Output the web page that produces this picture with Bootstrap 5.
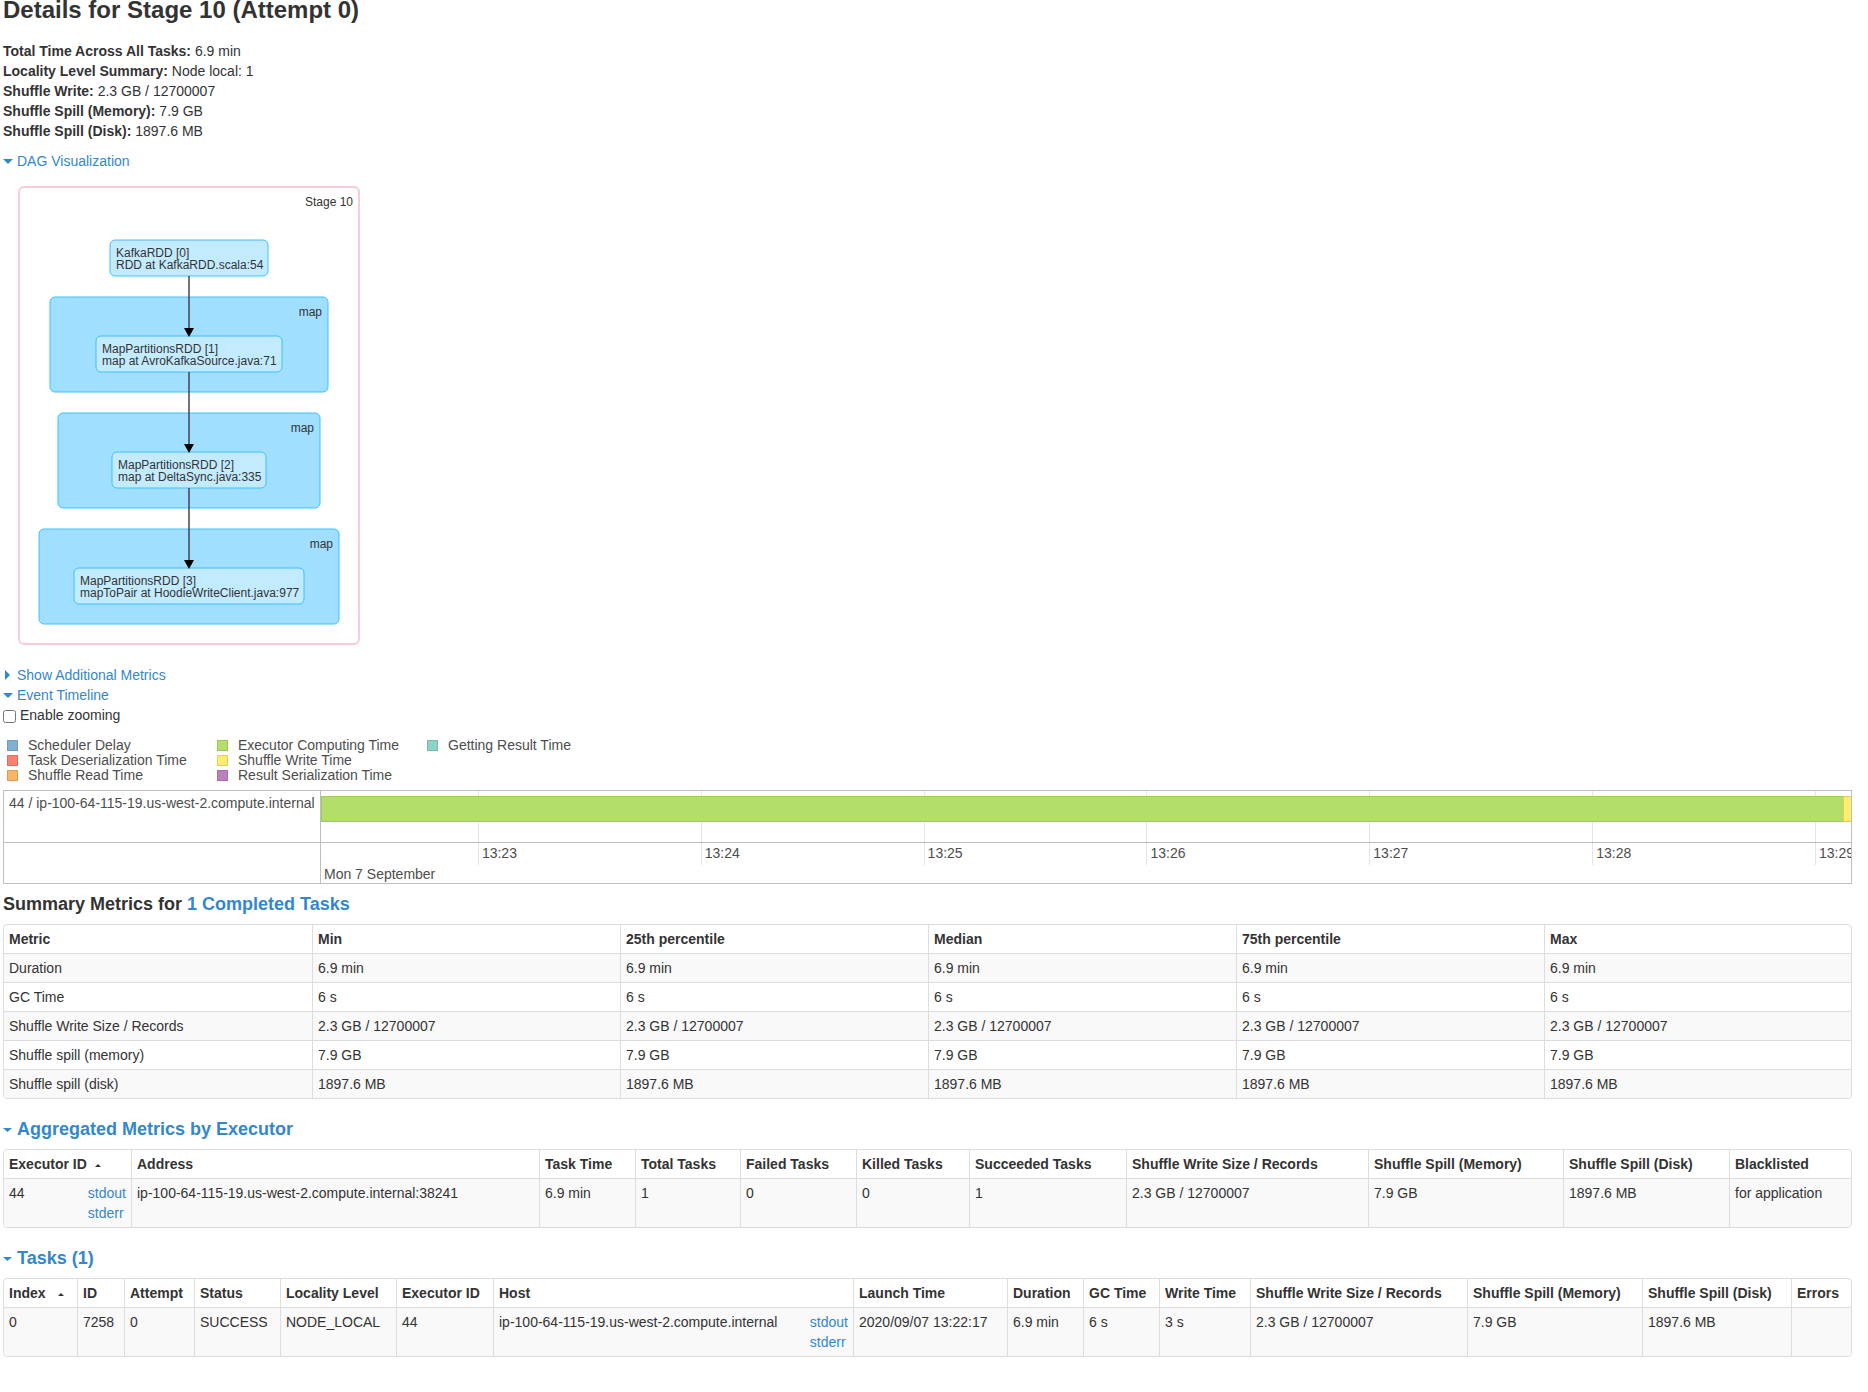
<!DOCTYPE html>
<html lang="en">
<head>
<meta charset="utf-8">
<meta name="viewport" content="width=device-width, initial-scale=1">
<title>Details for Stage 10 (Attempt 0)</title>
<link href="https://cdn.jsdelivr.net/npm/bootstrap@5.3.0/dist/css/bootstrap.min.css" rel="stylesheet">
<style>
  body { font-family: "Liberation Sans", Arial, sans-serif; font-size: 14px; line-height: 20px; color: #333; background: #fff; }
  a { color: #3387cc; text-decoration: none; }
  .page { padding: 0 16px 24px 3px; }
  .page-title { font-size: 24px; line-height: 20px; font-weight: 700; margin: 0 0 21px; }
  .section-title { font-size: 18px; line-height: 20px; font-weight: 700; margin: 20px 0 10px; }
  .timeline + .section-title { margin-top: 10px; }
  .facts { margin: 0 0 10px; }
  .toggle { display: flex; align-items: center; }
  .toggle svg { width: 10px; height: 10px; margin-right: 4px; fill: #3387cc; flex: none; }
  .section-title svg { width: 9px; margin-right: 5px; }
  .dag { display: block; width: 400px; height: 494px; font-size: 12px; }
  .dag text { fill: #333; }
  .dag .stage { fill: #fff; stroke: #f9cdd7; stroke-width: 2; }
  .dag .scope { fill: #a0dfff; stroke: #3ec0ff; }
  .dag .rdd { fill: #c3ebff; stroke: #3ec0ff; }
  .dag .edge { stroke: #444; stroke-opacity: .75; stroke-width: 2; }
  .zoom-row { height: 20px; }
  .zoom-row input { width: 13px; height: 13px; margin: 2px 4px 0 0; }
  .legend-grid { display: grid; grid-template: repeat(3, 15px) / repeat(3, 210px); grid-auto-flow: column; margin: 13px 0 7px 4px; line-height: 15px; color: #4d4d4d; }
  .legend-grid span { display: flex; align-items: center; gap: 10px; }
  .legend-grid i { width: 11px; height: 11px; border: 1px solid rgba(0,0,0,.12); }
  .c-sched { background: #80b1d3; } .c-deser { background: #fb8072; } .c-read { background: #fdb462; }
  .c-comp { background: #b3de69; } .c-write { background: #ffed6f; } .c-ser { background: #bc80bd; } .c-get { background: #8dd3c7; }
  .timeline { border: 1px solid #bfbfbf; color: #4d4d4d; }
  .tl-side { width: 317px; border-right: 1px solid #bfbfbf; flex: none; padding: 2px 5px; white-space: nowrap; }
  .tl-main { flex: 1; min-width: 0; }
  .tl-plot { height: 52px; border-bottom: 1px solid #bfbfbf; }
  .tl-axis { height: 40px; }
  .tl-date { line-height: 18px; padding-left: 3px; }
  .ticks { display: flex; height: 100%; }
  .ticks > div { flex: 223 1 0; min-width: 0; box-shadow: inset 1px 0 #e5e5e5; text-indent: 4px; white-space: nowrap; overflow: hidden; }
  .ticks > div:first-child { flex-grow: 157; box-shadow: none; }
  .ticks > div:last-child { flex-grow: 36; }
  .tl-axis .ticks { height: 22px; }
  .tl-bar { position: absolute; top: 5px; left: 0; right: 0; height: 26px; display: flex; }
  .tl-bar .c-comp { flex: 1; border: 1px solid #a1c85e; border-right: 0; }
  .tl-bar .c-write { width: 8px; border: 1px solid #e5c85c; border-right: 0; }
  .grid-wrap { border: 1px solid #ddd; border-radius: 4px; overflow: hidden; }
  .grid-table { table-layout: fixed; width: 100%; margin: 0; border-collapse: separate; border-spacing: 0; }
  .grid-table th, .grid-table td { padding: 4px 5px; vertical-align: top; white-space: nowrap; text-align: left; border-right: 1px solid #ddd; }
  .grid-table tr > :last-child { border-right: 0; }
  .grid-table tbody td { border-top: 1px solid #ddd; }
  .grid-table tbody tr:nth-child(odd) > * { background: #f9f9f9; }
  .grid-table thead tr { height: 28px; }
  .sort { display: inline-block; vertical-align: middle; border: 3px solid transparent; border-top: 0; border-bottom: 3px solid #333; margin-left: 8px; }
  #tasks .sort { margin-left: 12px; }
</style>
</head>
<body>
<main class="page">
  <h1 class="page-title">Details for Stage 10 (Attempt 0)</h1>
  <ul class="list-unstyled facts">
    <li><strong>Total Time Across All Tasks:</strong> 6.9 min</li>
    <li><strong>Locality Level Summary:</strong> Node local: 1</li>
    <li><strong>Shuffle Write:</strong> 2.3 GB / 12700007</li>
    <li><strong>Shuffle Spill (Memory):</strong> 7.9 GB</li>
    <li><strong>Shuffle Spill (Disk):</strong> 1897.6 MB</li>
  </ul>

  <a class="toggle" href="#dag"><svg viewBox="0 0 10 10" aria-hidden="true"><path d="M0 3h10L5 8z"/></svg>DAG Visualization</a>
  <svg class="dag" id="dag" viewBox="3 171 400 494" role="img" aria-label="Stage 10 graph">
    <rect class="stage" x="19" y="187" width="340" height="457" rx="5"/>
    <text x="353" y="206" text-anchor="end">Stage 10</text>
    <rect class="scope" x="50" y="297" width="278" height="95" rx="5"/>
    <rect class="scope" x="58" y="413" width="262" height="95" rx="5"/>
    <rect class="scope" x="39" y="529" width="300" height="95" rx="5"/>
    <text x="322" y="316" text-anchor="end">map</text>
    <text x="314" y="432" text-anchor="end">map</text>
    <text x="333" y="548" text-anchor="end">map</text>
    <rect class="rdd" x="110" y="240" width="158" height="36" rx="5"/>
    <rect class="rdd" x="96" y="336" width="186" height="36" rx="5"/>
    <rect class="rdd" x="112" y="452" width="154" height="36" rx="5"/>
    <rect class="rdd" x="74" y="568" width="230" height="36" rx="5"/>
    <path class="edge" d="M189 276V330M189 372V446M189 488V562"/>
    <path d="M184 328h10l-5 9zM184 444h10l-5 9zM184 560h10l-5 9z"/>
    <text><tspan x="116" y="257">KafkaRDD [0]</tspan><tspan x="116" y="269">RDD at KafkaRDD.scala:54</tspan></text>
    <text><tspan x="102" y="353">MapPartitionsRDD [1]</tspan><tspan x="102" y="365">map at AvroKafkaSource.java:71</tspan></text>
    <text><tspan x="118" y="469">MapPartitionsRDD [2]</tspan><tspan x="118" y="481">map at DeltaSync.java:335</tspan></text>
    <text><tspan x="80" y="585">MapPartitionsRDD [3]</tspan><tspan x="80" y="597">mapToPair at HoodieWriteClient.java:977</tspan></text>
  </svg>

  <a class="toggle" href="#metrics"><svg viewBox="0 0 10 10" aria-hidden="true"><path d="M2 0v10l5-5z"/></svg>Show Additional Metrics</a>
  <a class="toggle" href="#timeline"><svg viewBox="0 0 10 10" aria-hidden="true"><path d="M0 3h10L5 8z"/></svg>Event Timeline</a>
  <div class="zoom-row d-flex align-items-center"><input type="checkbox" id="zoom"><label for="zoom">Enable zooming</label></div>

  <div class="legend-grid">
    <span><i class="c-sched"></i>Scheduler Delay</span>
    <span><i class="c-deser"></i>Task Deserialization Time</span>
    <span><i class="c-read"></i>Shuffle Read Time</span>
    <span><i class="c-comp"></i>Executor Computing Time</span>
    <span><i class="c-write"></i>Shuffle Write Time</span>
    <span><i class="c-ser"></i>Result Serialization Time</span>
    <span><i class="c-get"></i>Getting Result Time</span>
  </div>

  <section class="timeline" id="timeline">
    <div class="d-flex tl-plot">
      <div class="tl-side">44 / ip-100-64-115-19.us-west-2.compute.internal</div>
      <div class="tl-main position-relative">
        <div class="ticks"><div></div><div></div><div></div><div></div><div></div><div></div><div></div><div></div></div>
        <div class="tl-bar"><div class="c-comp"></div><div class="c-write"></div></div>
      </div>
    </div>
    <div class="d-flex tl-axis">
      <div class="tl-side"></div>
      <div class="tl-main">
        <div class="ticks"><div></div><div>13:23</div><div>13:24</div><div>13:25</div><div>13:26</div><div>13:27</div><div>13:28</div><div>13:29</div></div>
        <div class="tl-date">Mon 7 September</div>
      </div>
    </div>
  </section>

  <h2 class="section-title">Summary Metrics for <a href="#completed">1 Completed Tasks</a></h2>
  <div class="grid-wrap">
    <table class="grid-table" id="completed">
      <colgroup><col width="309"><col width="308"><col width="308"><col width="308"><col width="308"><col width="308"></colgroup>
      <thead><tr><th>Metric</th><th>Min</th><th>25th percentile</th><th>Median</th><th>75th percentile</th><th>Max</th></tr></thead>
      <tbody>
        <tr><td>Duration</td><td>6.9 min</td><td>6.9 min</td><td>6.9 min</td><td>6.9 min</td><td>6.9 min</td></tr>
        <tr><td>GC Time</td><td>6 s</td><td>6 s</td><td>6 s</td><td>6 s</td><td>6 s</td></tr>
        <tr><td>Shuffle Write Size / Records</td><td>2.3 GB / 12700007</td><td>2.3 GB / 12700007</td><td>2.3 GB / 12700007</td><td>2.3 GB / 12700007</td><td>2.3 GB / 12700007</td></tr>
        <tr><td>Shuffle spill (memory)</td><td>7.9 GB</td><td>7.9 GB</td><td>7.9 GB</td><td>7.9 GB</td><td>7.9 GB</td></tr>
        <tr><td>Shuffle spill (disk)</td><td>1897.6 MB</td><td>1897.6 MB</td><td>1897.6 MB</td><td>1897.6 MB</td><td>1897.6 MB</td></tr>
      </tbody>
    </table>
  </div>

  <h2 class="section-title"><a class="toggle" href="#executors"><svg viewBox="0 0 9 10" aria-hidden="true"><path d="M0 4h9L4.500 8z"/></svg>Aggregated Metrics by Executor</a></h2>
  <div class="grid-wrap">
    <table class="grid-table" id="executors">
      <colgroup><col width="128"><col width="408"><col width="96"><col width="105"><col width="116"><col width="113"><col width="157"><col width="242"><col width="195"><col width="166"><col width="121"></colgroup>
      <thead><tr><th>Executor ID<span class="sort"></span></th><th>Address</th><th>Task Time</th><th>Total Tasks</th><th>Failed Tasks</th><th>Killed Tasks</th><th>Succeeded Tasks</th><th>Shuffle Write Size / Records</th><th>Shuffle Spill (Memory)</th><th>Shuffle Spill (Disk)</th><th>Blacklisted</th></tr></thead>
      <tbody><tr><td><div class="d-flex justify-content-between"><span>44</span><span><a href="#stdout">stdout</a><br><a href="#stderr">stderr</a></span></div></td><td>ip-100-64-115-19.us-west-2.compute.internal:38241</td><td>6.9 min</td><td>1</td><td>0</td><td>0</td><td>1</td><td>2.3 GB / 12700007</td><td>7.9 GB</td><td>1897.6 MB</td><td>for application</td></tr></tbody>
    </table>
  </div>

  <h2 class="section-title"><a class="toggle" href="#tasks"><svg viewBox="0 0 9 10" aria-hidden="true"><path d="M0 4h9L4.500 8z"/></svg>Tasks (1)</a></h2>
  <div class="grid-wrap">
    <table class="grid-table" id="tasks">
      <colgroup><col width="74"><col width="47"><col width="70"><col width="86"><col width="116"><col width="97"><col width="360"><col width="154"><col width="76"><col width="76"><col width="91"><col width="217"><col width="175"><col width="149"><col width="59"></colgroup>
      <thead><tr><th>Index<span class="sort"></span></th><th>ID</th><th>Attempt</th><th>Status</th><th>Locality Level</th><th>Executor ID</th><th>Host</th><th>Launch Time</th><th>Duration</th><th>GC Time</th><th>Write Time</th><th>Shuffle Write Size / Records</th><th>Shuffle Spill (Memory)</th><th>Shuffle Spill (Disk)</th><th>Errors</th></tr></thead>
      <tbody><tr><td>0</td><td>7258</td><td>0</td><td>SUCCESS</td><td>NODE_LOCAL</td><td>44</td><td><div class="d-flex justify-content-between"><span>ip-100-64-115-19.us-west-2.compute.internal</span><span><a href="#stdout">stdout</a><br><a href="#stderr">stderr</a></span></div></td><td>2020/09/07 13:22:17</td><td>6.9 min</td><td>6 s</td><td>3 s</td><td>2.3 GB / 12700007</td><td>7.9 GB</td><td>1897.6 MB</td><td></td></tr></tbody>
    </table>
  </div>
</main>
<script src="https://cdn.jsdelivr.net/npm/bootstrap@5.3.0/dist/js/bootstrap.bundle.min.js"></script>
</body>
</html>
